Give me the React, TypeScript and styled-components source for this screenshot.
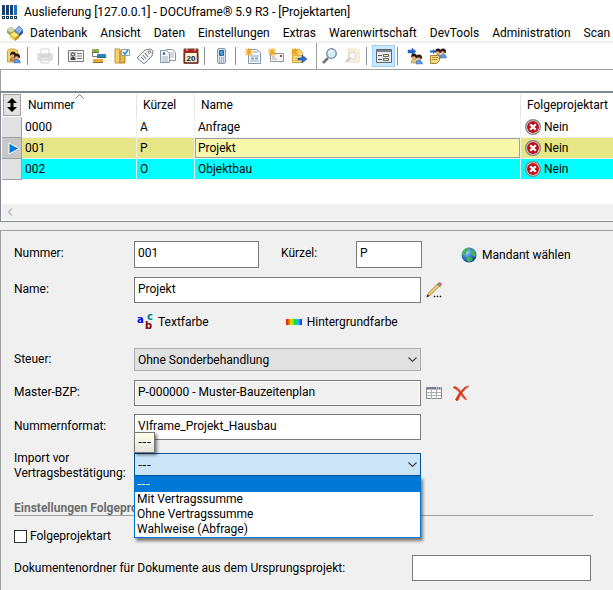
import React from 'react';
import styled, { createGlobalStyle, css } from 'styled-components';

const GlobalStyle = createGlobalStyle`
  *, *::before, *::after { box-sizing: border-box; }
  body { margin: 0; background: #f0f0f0; overflow: hidden; }
  body, button, input, select { font: 12px/16px Roboto, "Noto Sans", sans-serif; color: #000; }
`;

const Window = styled.div`
  display: flex;
  flex-direction: column;
  min-height: 100vh;
  background: #f0f0f0;
`;

const TitleBar = styled.header`
  display: flex;
  align-items: center;
  gap: 6px;
  height: 24px;
  padding-left: 2px;
  background: #fff;
  white-space: nowrap;
`;

const Title = styled.h1`
  margin: 0;
  font: inherit;
`;

const MenuBar = styled.nav`
  display: flex;
  align-items: center;
  gap: 13px;
  height: 17px;
  padding-left: 7px;
  background: #fff;
`;

const MenuLogo = styled.span`
  display: flex;
  margin-right: -6px;
`;

const MenuItem = styled.button`
  flex: none;
  padding: 0;
  border: 0;
  background: none;
`;

const Toolbar = styled.div`
  display: flex;
  align-items: center;
  height: 29px;
  padding-left: 2px;
  border-top: 2px solid #f0f0f0;
  border-bottom: 1px solid #a0a0a0;
  background: #fff;
`;

const ToolButton = styled.button<{ $active?: boolean; $faded?: boolean }>`
  display: flex;
  align-items: center;
  justify-content: center;
  flex: none;
  width: 23px;
  height: 22px;
  padding: 0;
  border: 1px solid ${p => (p.$active ? '#99d1ff' : 'transparent')};
  background: ${p => (p.$active ? '#cce8ff' : 'none')};
  ${p => p.$faded && css`opacity: 0.4;`}
`;

const Separator = styled.span`
  flex: none;
  width: 1px;
  height: 18px;
  margin: 0 5px 0 2px;
  background: #8c8c8c;
`;

const GroupBorder = styled.span`
  flex: none;
  align-self: stretch;
  width: 1px;
  margin: 0 1px 0 6px;
  background: #a0a0a0;
`;

const SearchInput = styled.input`
  width: 100%;
  height: 21px;
  padding: 0 4px;
  border: 0;
  border-left: 1px solid #a0a0a0;
  background: #fff;
  outline: none;
`;

const GridFrame = styled.section`
  height: 131px;
  display: flex;
  flex-direction: column;
  justify-content: space-between;
  padding: 1px 0 1px 1px;
  border: solid #828790;
  border-width: 2px 0 1px 1px;
  background: #fff;
`;

const Table = styled.table`
  width: 100%;
  table-layout: fixed;
  border-collapse: separate;
  border-spacing: 0;
`;

const Col = styled.col<{ $w?: number }>`
  ${p => p.$w && css`width: ${p.$w}px;`}
`;

const HeadCell = styled.th`
  position: relative;
  height: 23px;
  padding: 0 0 2px 6px;
  border-right: 1px solid #e5e5e5;
  font-weight: normal;
  text-align: left;
  white-space: nowrap;
  &:last-child { border-right: 0; }
`;

const SortCell = styled.th`
  padding: 0 1px 1px;
`;

const SortButton = styled.button`
  display: flex;
  align-items: center;
  justify-content: center;
  width: 18px;
  height: 22px;
  padding: 0;
  border: 1px solid #a0a0a0;
  background: #e1e1e1;
`;

const SortMark = styled.svg`
  position: absolute;
  top: 0;
  left: 53px;
`;

const Row = styled.tr<{ $bg: string }>`
  background: ${p => p.$bg};
`;

const Cell = styled.td`
  height: 21px;
  padding: 0 0 0 3px;
  border: solid #f0f0f0;
  border-width: 0 1px 1px 0;
  white-space: nowrap;
  &:last-child { border-right: 0; padding-left: 4px; }
`;

const FocusCell = styled(Cell)`
  background: #f8f8aa;
  box-shadow: inset 0 0 0 1px #a0a0a0;
`;

const RowHead = styled.th<{ $current?: boolean }>`
  height: 21px;
  padding: 0 0 0 4px;
  border: solid #a0a0a0;
  border-width: 0 1px 1px 0;
  background: ${p => (p.$current ? '#c8c8c8' : '#e1e1e1')};
  line-height: 0;
`;

const Flag = styled.span`
  display: flex;
  align-items: center;
  gap: 3px;
`;

const ScrollBar = styled.div`
  display: flex;
  align-items: center;
  height: 16px;
  background: #f0f0f0;
`;

const ScrollButton = styled.button`
  display: flex;
  padding: 0 5px;
  border: 0;
  background: none;
`;

const Form = styled.form`
  flex: 1;
  display: flex;
  flex-direction: column;
  margin-top: 8px;
  padding: 10px 20px 9px 13px;
  border: solid #a0a0a0;
  border-width: 1px 0 0 1px;
`;

const FormRow = styled.div<{ $gap: number; $top?: boolean }>`
  display: flex;
  align-items: ${p => (p.$top ? 'flex-start' : 'center')};
  margin-bottom: ${p => p.$gap}px;
`;

const Label = styled.label`
  flex: none;
  width: 120px;
  line-height: 15px;
`;

const InputLabel = styled(Label)`
  padding-bottom: 2px;
`;

const ShortLabel = styled(InputLabel)`
  width: 75px;
`;

const LongLabel = styled(Label)`
  width: auto;
`;

const TextInput = styled.input<{ $w: number }>`
  width: ${p => p.$w}px;
  height: 26px;
  padding: 0 3px 3px;
  border: 1px solid #7a7a7a;
  border-radius: 0;
  background: #fff;
  outline: none;
  &:read-only {
    background: #f0f0f0;
    box-shadow: inset 0 0 0 1px #fff;
  }
`;

const TallInput = styled(TextInput)`
  height: 27px;
`;

const NumberInput = styled(TallInput)`
  margin-right: 22px;
`;

const FolderInput = styled(TextInput)`
  margin-left: auto;
  margin-right: 2px;
`;

const LinkButton = styled.button<{ $indent: number }>`
  display: flex;
  align-items: center;
  gap: 5px;
  margin-left: ${p => p.$indent}px;
  padding: 0;
  border: 0;
  background: none;
`;

const IconButton = styled.button`
  display: flex;
  margin-left: 5px;
  margin-right: 6px;
  padding: 0;
  border: 0;
  background: none;
`;

const SelectBox = styled.div`
  position: relative;
  width: 287px;
`;

const OpenSelectBox = styled(SelectBox)`
  margin-top: 2px;
`;

const dashFont = css`font-family: "DejaVu Sans", sans-serif;`;

const Select = styled.select<{ $open?: boolean }>`
  display: block;
  appearance: none;
  width: 100%;
  height: 23px;
  padding: 0 22px 0 3px;
  border: 1px solid ${p => (p.$open ? '#005499' : '#adadad')};
  border-radius: 0;
  background: ${p => (p.$open ? '#cce4f7' : '#e1e1e1')};
  outline: none;
  ${p => p.$open && dashFont}
`;

const Chevron = styled.svg`
  position: absolute;
  right: 4px;
  top: 9px;
  pointer-events: none;
`;

const OptionList = styled.ul`
  position: absolute;
  z-index: 2;
  top: 100%;
  left: 0;
  right: 0;
  margin: 0;
  padding: 0;
  border: solid #0078d7;
  border-width: 0 1px 1px;
  background: #fff;
  box-shadow: 2px 3px 3px rgba(0, 0, 0, 0.5);
  list-style: none;
`;

const Option = styled.li<{ $selected?: boolean }>`
  padding-left: 2px;
  line-height: 15px;
  ${p => p.$selected && css`
    padding-top: 1px;
    background: #0078d7;
    color: #fff;
    ${dashFont}
  `}
`;

const Tooltip = styled.div`
  position: absolute;
  z-index: 3;
  bottom: 100%;
  left: 0;
  width: 21px;
  height: 21px;
  border: 1px solid #767676;
  background: linear-gradient(#ffffec, #e4e5e0);
  box-shadow: 2px 2px 3px rgba(0, 0, 0, 0.5);
  line-height: 19px;
  text-align: center;
  ${dashFont}
`;

const SectionTitle = styled.h2`
  margin: 0 0 13px;
  border-bottom: 1px solid #a0a0a0;
  color: #6d6d6d;
  font-size: 12px;
  font-weight: bold;
  line-height: 13px;
`;

const Check = styled.input`
  appearance: none;
  width: 13px;
  height: 13px;
  margin: 0 3px 0 0;
  border: 1px solid #333;
  background: #fff;
`;

const Drawing = styled.svg`
  flex: none;
  overflow: visible;
`;

const Icon = ({ children, w = 16, h = 16 }: { children: React.ReactNode; w?: number; h?: number }) => (
  <Drawing width={w} height={h} viewBox={`0 0 ${w} ${h}`} aria-hidden="true">{children}</Drawing>
);

const AppLogo = () => (
  <Icon>
    {[0, 4, 8, 12].map((x, i) => (
      <g key={x}>
        <path d={`M${x} 1h3v10h-3z`} fill={i === 3 ? '#1f6fc0' : '#15406f'} />
        <path d={`M${x} 12h3v3h-3z`} fill="#123456" />
        <path d={`M${x + 1} 13h1v1h-1z`} fill="#dce8f4" />
      </g>
    ))}
  </Icon>
);

const CubesLogo = () => (
  <Icon>
    <path d="M0 5l4-3 4 3-4 3z" fill="#d3dcb4" stroke="#93a070" strokeWidth=".6" />
    <path d="M0 5l4 3v3L0 8z" fill="#98a66e" />
    <path d="M4 8l4-3v3l-4 3z" fill="#7c8b55" />
    <path d="M8 5l4-4 4 4-4 4z" fill="#8fb6ea" stroke="#2c5eae" strokeWidth=".6" />
    <path d="M8 5l4 4v3L8 8z" fill="#4d82d0" />
    <path d="M12 9l4-4v3l-4 4z" fill="#2450a0" />
    <path d="M3 9.500l4-3 5 3.500-4 3z" fill="#ffe87c" stroke="#d3a81f" strokeWidth=".6" />
    <path d="M3 9.500l5 3.500v3l-5-4z" fill="#eabf30" />
    <path d="M8 13l4-3v3l-4 3z" fill="#bd9014" />
  </Icon>
);

const Person = ({ x, y, body }: { x: number; y: number; body: string }) => (
  <g>
    <path d={`M${x - 3} ${y + 6}q0-4 3-4t3.500 4z`} fill={body} stroke="#35578f" strokeWidth=".4" />
    <circle cx={x} cy={y} r="2.200" fill="#e9a878" />
    <path d={`M${x - 2.8} ${y + 1}q-.6-4.500 2.800-4.500t3 4l-1.200 1q0-2-1.600-2.300t-2.200.8z`} fill="#2d1a14" />
  </g>
);

const Star = () => (
  <path d="M4 0v8M0 4h8M1 1l6 6M7 1l-6 6" stroke="#f0a818" strokeWidth="1.100" />
);

const FolderPeople = () => (
  <Icon>
    <path d="M1.500 3l2-2h5l1 1h2v12h-10z" fill="#f8d467" stroke="#cf9f37" />
    <Person x={7} y={7} body="#d98c3c" />
    <Person x={11} y={9} body="#5f9be8" />
  </Icon>
);

const Printer = () => (
  <Icon>
    <path d="M4 1h8v6H4z" fill="#fff" stroke="#999" />
    <path d="M1 6h14v6H1z" fill="#bbb" stroke="#888" />
    <path d="M4 10h8v5H4z" fill="#f5f5f5" stroke="#999" />
    <path d="M5 12h6M3 8h10" stroke="#777" />
  </Icon>
);

const Card = () => (
  <Icon>
    <path d="M.5 2.500h15v11H.5z" fill="#f6f6f6" stroke="#777" />
    <path d="M2 4h6v8H2z" fill="#c8c8c8" />
    <circle cx="5" cy="6.500" r="1.600" fill="#eee" stroke="#333" />
    <path d="M2.500 12q0-3 2.500-3t2.500 3z" fill="#444" />
    <path d="M9 5.500h5M9 8h5M9 10.500h5" stroke="#777" />
  </Icon>
);

const Bars = () => (
  <Icon>
    <path d="M1 1h7v4H1z" fill="#8cb04a" />
    <path d="M6 6h9v4H6z" fill="#2b86bd" />
    <path d="M1.500 5v3.500H6" fill="none" stroke="#777" />
    <path d="M2 11h10v4H2z" fill="#eda735" />
    <path d="M1 4.500h7M6 9.500h9M2 14.500h10" stroke="#334" strokeOpacity=".5" />
  </Icon>
);

const FolderCheck = () => (
  <Icon>
    <path d="M1 1h5v14H1z" fill="#f5d270" stroke="#c39434" />
    <path d="M6 3h5v12H6z" fill="#e8b94d" stroke="#b58325" />
    <path d="M7.500 1.500h8v6h-8z" fill="#f3f9ff" stroke="#8ca0b4" />
    <path d="M9 4l2 2 3-4" fill="none" stroke="#238bc8" strokeWidth="1.500" />
  </Icon>
);

const Tag = () => (
  <Icon>
    <path d="M1 9l7-7 6-1 2 2-1 5-7 7q-1 1-2 0L1 11q-1-1 0-2z" fill="#f3f5f7" stroke="#7b8187" />
    <circle cx="12.500" cy="4" r="1.200" fill="#fff" stroke="#777" />
    <path d="M4 9l3 3M6 7l3 4M8 5l3 4" stroke="#58708a" />
  </Icon>
);

const Documents = () => (
  <Icon>
    <path d="M6.500 1.500h6l3 3v8h-9z" fill="#fff" stroke="#8294a8" />
    <path d="M8 5h6M8 7h6M8 9h6" stroke="#a2b3cc" />
    <path d="M.5 2.500h6l3 3v9h-9z" fill="#fafcff" stroke="#8294a8" />
    <path d="M2 9h6M2 11h6M2 13h6" stroke="#9fa9ba" />
    <path d="M3 7l1-3 1 3" fill="none" stroke="#3465bb" />
  </Icon>
);

const DayText = styled.text`
  font: bold 8px "Liberation Sans", sans-serif;
`;

const CalendarIcon = () => (
  <Icon>
    <path d="M1 1h14v14H1z" fill="#fff7d9" stroke="#68433a" />
    <path d="M1 1h14v4H1z" fill="#a32a20" />
    <path d="M4 0v3M12 0v3" stroke="#ddd" />
    <path d="M1.500 5v10h13V5" fill="none" stroke="#6a372d" strokeWidth="1.500" />
    <DayText x="3.500" y="13" fill="#111">20</DayText>
  </Icon>
);

const Phone = () => (
  <Icon>
    <rect x="3.500" y="0.500" width="8" height="15" rx="1.500" fill="#d9dfe6" stroke="#8d99a5" />
    <path d="M5.500 2.500h4v5h-4z" fill="#4597da" stroke="#2c68a3" />
    <path d="M5 10h5M5 12h5M5 14h5" stroke="#788490" strokeDasharray="1 1" />
  </Icon>
);

const NewDocument = () => (
  <Icon>
    <path d="M3.500 1.500h8l4 3v11h-12z" fill="#fff" stroke="#8294a8" />
    <path d="M8 4h5M5 8h9M5 13h9" stroke="#8ca2c0" />
    <path d="M6 9.500h3v2H6zM10 9.500h3v2h-3z" fill="#6fa0d8" />
    <Star />
  </Icon>
);

const NewMail = () => (
  <Icon>
    <path d="M2.500 5.500h13v8h-13z" fill="#f4f4f4" stroke="#9a9a9a" />
    <path d="M4 11h5M4 9h3" stroke="#aaa" />
    <path d="M12 7h2v2h-2z" fill="#cf3525" />
    <Star />
  </Icon>
);

const FolderArrow = () => (
  <Icon>
    <path d="M1.500 1.500h7l3 3v10h-10z" fill="#f9df87" stroke="#d3a13a" />
    <path d="M3 7.500h7M3 10h4M3 12.500h5" stroke="#dcb04a" />
    <path d="M7 10h4V7l5 4-5 4v-3H7z" fill="#2f6bd2" stroke="#1a479c" strokeWidth=".6" />
    <Star />
  </Icon>
);

const Magnifier = () => (
  <Icon>
    <path d="M6 10l-5 5" stroke="#68727f" strokeWidth="2.500" />
    <circle cx="9.500" cy="5.500" r="4.800" fill="#d0ecfb" stroke="#7b8897" strokeWidth="1.300" />
    <path d="M6.500 5q1-2.500 4-2" fill="none" stroke="#fff" strokeWidth="1.400" />
  </Icon>
);

const FolderSearch = () => (
  <Icon>
    <path d="M3 1h6l5 2v11H4z" fill="#f8dfa2" stroke="#dcae60" />
    <path d="M5 10l-4 4" stroke="#777" strokeWidth="2" />
    <circle cx="7.500" cy="7.500" r="3.500" fill="#eef6fb" stroke="#8e8e8e" />
  </Icon>
);

const FormView = () => (
  <Icon>
    <path d="M.5 1.500h15v13H.5z" fill="#e9e9e9" stroke="#5f6770" />
    <path d="M1 3h14" stroke="#7b838c" strokeWidth="2" />
    <path d="M2 7.500h4M2 11.500h4" stroke="#555" />
    <path d="M7.500 6.500h5v2h-5zM7.500 10.500h5v2h-5z" fill="#fff69a" stroke="#5f6770" />
  </Icon>
);

const BlueArrow = () => <path d="M1 2h4V0l4 3.500L5 7V5H1z" fill="#2469cf" stroke="#1d4d9c" strokeWidth=".4" />;

const ArrowPeople = () => (
  <Icon>
    <BlueArrow />
    <Person x={7} y={9} body="#eecb62" />
    <Person x={12} y={10} body="#5f9be8" />
  </Icon>
);

const ArrowPeopleNote = () => (
  <Icon>
    <Person x={8} y={4} body="#eecb62" />
    <Person x={13} y={4} body="#5f9be8" />
    <path d="M0 2.500h3V1l3 2.500L3 6V4.500H0z" fill="#2469cf" />
    <path d="M.5 7.500h9v5l-3 3h-6z" fill="#f4dc7c" stroke="#a98133" />
    <path d="M2 9.500h6M2 11.500h5" stroke="#b68e3d" />
  </Icon>
);

const RejectIcon = () => (
  <Icon>
    <circle cx="8" cy="8" r="7.300" fill="#eee" stroke="#868686" strokeWidth="1.400" />
    <circle cx="8" cy="8" r="6" fill="#bd1219" />
    <path d="M5.200 5.200l5.600 5.600M10.800 5.200l-5.600 5.600" stroke="#fff" strokeWidth="2.200" />
  </Icon>
);

const Globe = () => (
  <Icon>
    <defs>
      <radialGradient id="sea" cx=".35" cy=".3" r=".8">
        <stop offset="0" stopColor="#a9d6ff" />
        <stop offset=".5" stopColor="#2d78d6" />
        <stop offset="1" stopColor="#0b2b7a" />
      </radialGradient>
    </defs>
    <circle cx="8" cy="8" r="7.500" fill="url(#sea)" />
    <path d="M2 4q3-4 6-3l-1 3-2 1v2l-3 1-1-1zM11 2l3 3 1 4-2 1-3-3zM5 10l4 0 3 2-3 3-3-1z" fill="#45b649" />
  </Icon>
);

const Pencil = () => (
  <Icon w={17}>
    <path d="M1 15l1.500-4 9-9 2 2-9 9z" fill="#f4cd72" stroke="#9c6f32" strokeWidth=".8" />
    <path d="M11 2l3 3 1-1-3-3z" fill="#4d8f66" />
    <path d="M12 1l2-1 2 2-1 2z" fill="#d65d68" />
    <path d="M.5 15.500l1-3 2 1.500z" fill="#333" />
    <path d="M8 14h1v1H8zM11 14h1v1h-1zM14 14h1v1h-1z" fill="#111" stroke="#111" strokeWidth=".5" />
  </Icon>
);

const LetterText = styled.text`
  font: bold 10px "DejaVu Sans", sans-serif;
`;

const Letters = () => (
  <Icon>
    <LetterText x="0" y="9" fill="#0000e0">a</LetterText>
    <LetterText x="8" y="15" fill="#800000">b</LetterText>
    <LetterText x="10" y="6" fill="#008080">c</LetterText>
  </Icon>
);

const Rainbow = () => (
  <Icon h={6}>
    {['#e03010', '#f07010', '#f5d000', '#a0e000', '#20d830', '#00d8a0', '#20a8f0', '#2040e0'].map((c, i) => (
      <path key={c} d={`M${i * 2} 0h2v6h-2z`} fill={c} />
    ))}
  </Icon>
);

const GridIcon = () => (
  <Icon>
    <path d="M.5 2.500h15v11H.5z" fill="#fff" stroke="#858b92" />
    <path d="M1 3.500h14" stroke="#6d7986" strokeWidth="2" />
    <path d="M1 7.500h14M1 10.500h14M5.500 5v9M10.500 5v9" stroke="#aab0b6" />
    <path d="M10 3h1M12 3h1M14 3h1" stroke="#fff" />
  </Icon>
);

const Delete = () => (
  <Icon>
    <path d="M0 2.500q2-2 4.500.5 2.500 2 4.500 5l4.500 6.500q-2 0-3.500-2Q6 5 0 2.500z" fill="#e5452a" stroke="#c92b18" strokeWidth=".6" />
    <path d="M16 1q-4 0-7 4-4 4-6.500 9.500.5 1.500 2.500 1Q8 6.500 16 1z" fill="#dd3319" stroke="#d04024" strokeWidth=".6" />
  </Icon>
);

const ChevronDown = () => (
  <Chevron width="9" height="6" viewBox="0 0 9 6" aria-hidden="true">
    <path d="M.5 .5l4 4 4-4" fill="none" stroke="#444" strokeWidth="1.200" />
  </Chevron>
);

const menu = ['Datenbank', 'Ansicht', 'Daten', 'Einstellungen', 'Extras', 'Warenwirtschaft', 'DevTools', 'Administration', 'Scan'];

const rows = [
  { number: '0000', code: 'A', name: 'Anfrage', color: '#fff' },
  { number: '001', code: 'P', name: 'Projekt', color: '#e6e686', current: true },
  { number: '002', code: 'O', name: 'Objektbau', color: '#00ffff' },
];

const importOptions = ['---', 'Mit Vertragssumme', 'Ohne Vertragssumme', 'Wahlweise (Abfrage)'];

export default function App() {
  return (
    <Window>
      <GlobalStyle />
      <TitleBar>
        <AppLogo />
        <Title>Auslieferung [127.0.0.1] - DOCUframe® 5.9 R3 - [Projektarten]</Title>
      </TitleBar>
      <MenuBar>
        <MenuLogo><CubesLogo /></MenuLogo>
        {menu.map(item => <MenuItem key={item} type="button">{item}</MenuItem>)}
      </MenuBar>
      <Toolbar role="toolbar">
        <ToolButton aria-label="Adressen"><FolderPeople /></ToolButton>
        <Separator />
        <ToolButton aria-label="Drucken" $faded><Printer /></ToolButton>
        <Separator />
        <ToolButton aria-label="Karte"><Card /></ToolButton>
        <ToolButton aria-label="Zeitplan"><Bars /></ToolButton>
        <ToolButton aria-label="Aufgaben"><FolderCheck /></ToolButton>
        <ToolButton aria-label="Artikel"><Tag /></ToolButton>
        <ToolButton aria-label="Dokumente"><Documents /></ToolButton>
        <ToolButton aria-label="Kalender"><CalendarIcon /></ToolButton>
        <Separator />
        <ToolButton aria-label="Telefon"><Phone /></ToolButton>
        <Separator />
        <ToolButton aria-label="Neues Dokument"><NewDocument /></ToolButton>
        <ToolButton aria-label="Neue E-Mail"><NewMail /></ToolButton>
        <ToolButton aria-label="Neuer Ordner"><FolderArrow /></ToolButton>
        <GroupBorder />
        <ToolButton aria-label="Suchen"><Magnifier /></ToolButton>
        <ToolButton aria-label="Ordner durchsuchen" $faded><FolderSearch /></ToolButton>
        <Separator />
        <ToolButton aria-label="Formularansicht" $active><FormView /></ToolButton>
        <Separator />
        <ToolButton aria-label="Weiterleiten"><ArrowPeople /></ToolButton>
        <ToolButton aria-label="Weiterleiten mit Notiz"><ArrowPeopleNote /></ToolButton>
      </Toolbar>
      <SearchInput aria-label="Suche" />
      <GridFrame>
        <Table>
          <colgroup>
            <Col $w={20} />
            <Col $w={115} />
            <Col $w={58} />
            <Col />
            <Col $w={92} />
          </colgroup>
          <thead>
            <tr>
              <SortCell>
                <SortButton aria-label="Sortieren">
                  <Icon w={10} h={14}>
                    <path d="M5 0l5 5H6.500v4H10l-5 5-5-5h3.500V5H0z" />
                  </Icon>
                </SortButton>
              </SortCell>
              <HeadCell>
                Nummer
                <SortMark width="9" height="5" viewBox="0 0 9 5" aria-hidden="true">
                  <path d="M.5 4.500l4-4 4 4" fill="none" stroke="#777" />
                </SortMark>
              </HeadCell>
              <HeadCell>Kürzel</HeadCell>
              <HeadCell>Name</HeadCell>
              <HeadCell>Folgeprojektart</HeadCell>
            </tr>
          </thead>
          <tbody>
            {rows.map(r => {
              const NameCell = r.current ? FocusCell : Cell;
              return (
                <Row key={r.number} $bg={r.color}>
                  <RowHead $current={r.current} scope="row">
                    {r.current && (
                      <Icon w={12} h={13}>
                        <path d="M1 1l10 5.500L1 12z" fill="#0078d7" stroke="#fff" />
                      </Icon>
                    )}
                  </RowHead>
                  <Cell>{r.number}</Cell>
                  <Cell>{r.code}</Cell>
                  <NameCell>{r.name}</NameCell>
                  <Cell><Flag><RejectIcon />Nein</Flag></Cell>
                </Row>
              );
            })}
          </tbody>
        </Table>
        <ScrollBar>
          <ScrollButton aria-label="Nach links">
            <Icon w={6} h={8}><path d="M5 .5L1.500 4 5 7.500" fill="none" stroke="#bfbfbf" strokeWidth="1.600" /></Icon>
          </ScrollButton>
        </ScrollBar>
      </GridFrame>
      <Form>
        <FormRow $gap={9}>
          <InputLabel htmlFor="number">Nummer:</InputLabel>
          <NumberInput id="number" $w={125} defaultValue="001" />
          <ShortLabel htmlFor="code">Kürzel:</ShortLabel>
          <TallInput id="code" $w={66} defaultValue="P" />
          <LinkButton type="button" $indent={39}><Globe />Mandant wählen</LinkButton>
        </FormRow>
        <FormRow $gap={11}>
          <InputLabel htmlFor="name">Name:</InputLabel>
          <TextInput id="name" $w={287} defaultValue="Projekt" />
          <IconButton type="button" aria-label="Name bearbeiten"><Pencil /></IconButton>
        </FormRow>
        <FormRow $gap={18}>
          <LinkButton type="button" $indent={123}><Letters />Textfarbe</LinkButton>
          <LinkButton type="button" $indent={77}><Rainbow />Hintergrundfarbe</LinkButton>
        </FormRow>
        <FormRow $gap={9}>
          <Label htmlFor="tax">Steuer:</Label>
          <SelectBox>
            <Select id="tax"><option>Ohne Sonderbehandlung</option></Select>
            <ChevronDown />
          </SelectBox>
        </FormRow>
        <FormRow $gap={8}>
          <InputLabel htmlFor="plan">Master-BZP:</InputLabel>
          <TextInput id="plan" $w={287} readOnly defaultValue="P-000000 - Muster-Bauzeitenplan" />
          <IconButton type="button" aria-label="Plan auswählen"><GridIcon /></IconButton>
          <IconButton type="button" aria-label="Plan entfernen"><Delete /></IconButton>
        </FormRow>
        <FormRow $gap={11}>
          <InputLabel htmlFor="format">Nummernformat:</InputLabel>
          <TextInput id="format" $w={287} defaultValue="VIframe_Projekt_Hausbau" />
        </FormRow>
        <FormRow $gap={21} $top>
          <Label htmlFor="import">Import vor<br />Vertragsbestätigung:</Label>
          <OpenSelectBox>
            <Tooltip role="tooltip">---</Tooltip>
            <Select id="import" $open>
              {importOptions.map(o => <option key={o}>{o}</option>)}
            </Select>
            <ChevronDown />
            <OptionList role="listbox" aria-label="Import vor Vertragsbestätigung">
              {importOptions.map((o, i) => (
                <Option key={o} role="option" aria-selected={i === 0} $selected={i === 0}>{o}</Option>
              ))}
            </OptionList>
          </OpenSelectBox>
        </FormRow>
        <SectionTitle>Einstellungen Folgeprojektart</SectionTitle>
        <FormRow $gap={11}>
          <Check id="follow" type="checkbox" />
          <LongLabel htmlFor="follow">Folgeprojektart</LongLabel>
        </FormRow>
        <FormRow $gap={0}>
          <LongLabel htmlFor="folder">Dokumentenordner für Dokumente aus dem Ursprungsprojekt:</LongLabel>
          <FolderInput id="folder" $w={179} />
        </FormRow>
      </Form>
    </Window>
  );
}
